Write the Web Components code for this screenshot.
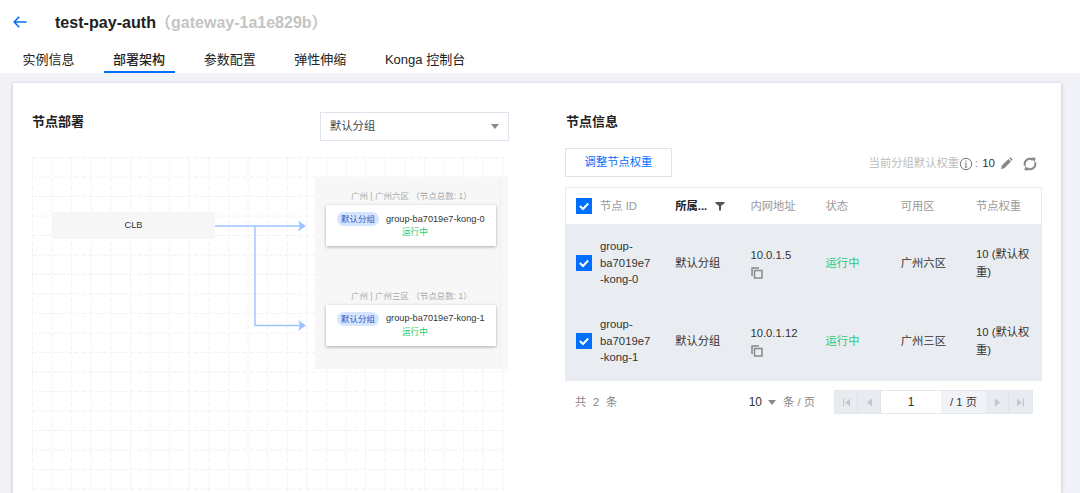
<!DOCTYPE html>
<html lang="zh">
<head>
<meta charset="utf-8">
<title>test-pay-auth</title>
<style>
    html, body { margin: 0; height: 493px; overflow: hidden; background: #f2f3f8; }
    body { font: 11.3px/17px "Liberation Sans", "Noto Sans CJK SC", sans-serif; color: #222; }
</style>
</head>
<body>
<gw-header name="test-pay-auth" sub="（gateway-1a1e829b）"></gw-header>
<gw-tabs>
    <gw-tab>实例信息</gw-tab>
    <gw-tab active>部署架构</gw-tab>
    <gw-tab>参数配置</gw-tab>
    <gw-tab>弹性伸缩</gw-tab>
    <gw-tab>Konga 控制台</gw-tab>
</gw-tabs>
<gw-card>
    <deploy-panel>
        <deploy-zone title-text="广州 | 广州六区 （节点总数: 1）" node="group-ba7019e7-kong-0"></deploy-zone>
        <deploy-zone title-text="广州 | 广州三区 （节点总数: 1）" node="group-ba7019e7-kong-1"></deploy-zone>
    </deploy-panel>
    <node-panel>
        <node-row head>
            <span slot="id">节点 ID</span>
            <span slot="group">所属...</span>
            <span slot="ip">内网地址</span>
            <span slot="state">状态</span>
            <span slot="zone">可用区</span>
            <span slot="weight">节点权重</span>
        </node-row>
        <node-row>
            <span slot="id">group-<br>ba7019e7<br>-kong-0</span>
            <span slot="group">默认分组</span>
            <span slot="ip">10.0.1.5</span>
            <span slot="state">运行中</span>
            <span slot="zone">广州六区</span>
            <span slot="weight">10 (默认权重)</span>
        </node-row>
        <node-row>
            <span slot="id">group-<br>ba7019e7<br>-kong-1</span>
            <span slot="group">默认分组</span>
            <span slot="ip">10.0.1.12</span>
            <span slot="state">运行中</span>
            <span slot="zone">广州三区</span>
            <span slot="weight">10 (默认权重)</span>
        </node-row>
    </node-panel>
</gw-card>

<script>
'use strict'

const define = (name, html, setup) => {
    customElements.define(name, class extends HTMLElement {
        constructor() {
            super()
            this.attachShadow({mode: 'open'})
        }
        connectedCallback() {
            this.shadowRoot.innerHTML = typeof html === 'function' ? html(this) : html
            if (setup) { setup(this) }
        }
    })
}

define('gw-header', el => /* html */`
<style>
    :host { display: flex; align-items: center; height: 44px; padding-left: 13px; background: #fff; }
    svg { width: 14px; height: 12px; margin-right: 28px; }
    b { font-size: 16.1px; color: #222; }
    span { font-size: 16px; font-weight: bold; color: #c4c4c4; margin-left: -1px; }
</style>
<svg viewBox="0 0 14 12" fill="none" stroke="#006eff" stroke-width="1.6"><path d="M13.5 6H1.2M6.2 .8 1.2 6l5 5.2"/></svg>
<b>${el.getAttribute('name')}</b><span>${el.getAttribute('sub')}</span>`)

define('gw-tabs', /* html */`
<style>
    :host { display: flex; gap: 19.6px; height: 29px; padding-left: 13px; background: #fff; box-sizing: border-box; }
</style>
<slot></slot>`)

define('gw-tab', el => /* html */`
<style>
    :host { display: block; padding: 0 9.5px; height: 29px; box-sizing: border-box; font-size: 13px; line-height: 31px; color: #222; white-space: nowrap; }
    :host([active]) { border-bottom: 2px solid #006eff; font-weight: 500; }
</style>
<slot></slot>`)

define('gw-card', /* html */`
<style>
    :host { display: flex; gap: 56px; width: 1048px; height: 410px; box-sizing: border-box; margin: 10px 0 0 13px; padding: 29px 0 0 19px; background: #fff; box-shadow: 0 1px 4px rgba(54, 58, 80, .3); }
</style>
<slot></slot>`)

define('panel-title', /* html */`
<style>
    :host { display: block; font-size: 13px; line-height: 20px; font-weight: bold; color: #222; }
</style>
<slot></slot>`)

define('deploy-panel', /* html */`
<style>
    :host { display: block; width: 477px; }
    .top { display: flex; justify-content: space-between; }
    .select { display: flex; justify-content: space-between; align-items: center; width: 189px; height: 29px; box-sizing: border-box; padding: 0 9px; border: 1px solid #dfe3ee; font-size: 11.3px; color: #444; }
    .select i { border: 4.5px solid transparent; border-top: 5.5px solid #888; border-bottom: 0; }
    .canvas { position: relative; width: 477px; height: 336px; margin-top: 16px; overflow: hidden; }
    .canvas > svg { position: absolute; left: 0; top: 0; }
    .clb { position: absolute; left: 20px; top: 55px; width: 163px; height: 27px; background: #f6f6f6; font-size: 9.2px; line-height: 27px; text-align: center; color: #333; }
    .zones { position: absolute; left: 283px; top: 20px; width: 193px; background: #f7f7f7; display: flex; flex-direction: column; gap: 7px; }
</style>
<div class="top">
    <panel-title>节点部署</panel-title>
    <div class="select">默认分组<i></i></div>
</div>
<div class="canvas">
    <svg width="474" height="336" id="grid" fill="none"></svg>
    <div class="clb">CLB</div>
    <svg width="474" height="336" fill="none" stroke="#9cc3ff" stroke-width="1.4">
        <path d="M183 69H268M223 69V168.5H268"/>
        <path d="M266 63.5 274 69 266 74.5 268 69Z" fill="#9cc3ff" stroke="none"/>
        <path d="M266 163 274 168.5 266 174 268 168.5Z" fill="#9cc3ff" stroke="none"/>
    </svg>
    <div class="zones"><slot></slot></div>
</div>`, el => {
    let d = ''
    for (let i = 0; i < 18; i++) { d += `M0 ${i * 19.5 + .5}H474` }
    for (let i = 0; i < 25; i++) { d += `M${i * 19.6 + .5} 0V336` }
    el.shadowRoot.getElementById('grid').innerHTML =
        `<path d="${d}" stroke="#f2f2f2" stroke-dasharray="5 2"/>`
})

define('deploy-zone', el => /* html */`
<style>
    :host { display: block; height: 92.5px; box-sizing: border-box; padding-top: 11px; border-right: 1px solid #efefef; margin-right: 7px; }
    .title { font-size: 8.5px; line-height: 17px; color: #aaa; white-space: nowrap; padding-left: 36px; }
    .node { width: 170px; height: 41px; margin: 0 0 0 11px; box-sizing: border-box; padding-top: 7px; background: #fff; box-shadow: 0 1px 3px rgba(54, 58, 80, .4); font-size: 9.2px; }
    .line { display: flex; align-items: center; height: 14px; padding-left: 11px; gap: 7px; white-space: nowrap; color: #333; }
    .tag { width: 42px; height: 14px; border-radius: 7px; background: #d5e5ff; color: #2a5ac0; font-size: 8.5px; line-height: 14px; text-align: center; }
    .state { font-size: 8.6px; line-height: 12px; padding-left: 76px; color: #2bc970; }
</style>
<div class="title">${el.getAttribute('title-text')}</div>
<div class="node">
    <div class="line"><span class="tag">默认分组</span><span>${el.getAttribute('node')}</span></div>
    <div class="state">运行中</div>
</div>`)

define('node-panel', /* html */`
<style>
    :host { display: block; width: 477px; }
    panel-title { margin-left: 1px; }
    .bar { display: flex; align-items: center; margin-top: 16px; height: 29px; }
    .btn { width: 107px; height: 29px; box-sizing: border-box; border: 1px solid #dfe3ee; color: #006eff; font-size: 11.3px; line-height: 27px; text-align: center; }
    .weight { margin-left: auto; display: flex; align-items: center; color: #bbb; padding-right: 5px; padding-top: 2px; }
    .weight b { font-weight: normal; font-size: 11.5px; color: #333; margin: 0 5px 0 0; }
    .weight span { color: #888; margin: 0 4px 0 2px; }
    .table { margin-top: 10px; border: 1px solid #e7eaf0; background: #e9edf2; }
    .foot { display: flex; align-items: center; height: 24px; margin-top: 9px; padding-left: 10px; color: #888; }
    .total { letter-spacing: 1.8px; }
    .size { margin-left: auto; display: flex; align-items: center; }
    .size b { font-weight: normal; font-size: 12px; color: #333; }
    .size i { border: 4px solid transparent; border-top: 5px solid #888; border-bottom: 0; margin: 0 7px 0 6px; }
    .pager { display: flex; margin: 0 9px 0 19px; height: 24px; box-sizing: border-box; border: 1px solid #e3e7ee; background: #e8ebf0; color: #333; }
    .pager div { display: flex; align-items: center; justify-content: center; width: 23px; box-sizing: border-box; border-right: 1px solid #dde1e8; }
    .pager div:last-child { border-right: 0; }
    .pager .num { width: 60px; background: #fff; border: 0; font-size: 12px; }
    .pager .of { width: 45px; background: #f2f3f8; border: 0; font-size: 11.3px; }
</style>
<panel-title>节点信息</panel-title>
<div class="bar">
    <div class="btn">调整节点权重</div>
    <div class="weight">当前分组默认权重
        <svg width="14" height="14" viewBox="0 0 14 14" fill="none" stroke="#777"><circle cx="7" cy="7" r="5.7"/><path d="M7 6v4M5.8 6.2H7M5.8 10.2h2.4M7 3.6v1.2"/></svg>
        <span>:</span><b>10</b>
        <svg width="13" height="13" viewBox="0 0 13 13" fill="#888" style="margin-right:10px"><path d="M1 12l.8-3.4 6.6-6.6 2.6 2.6-6.6 6.6zM9.2 1.2l1-1 2.6 2.6-1 1z"/></svg>
        <svg width="14" height="14" viewBox="0 0 14 14" fill="none" stroke="#888" stroke-width="2"><path d="M2 8.6A5 5 0 0 1 9.8 3M12 5.4A5 5 0 0 1 4.2 11"/><path d="M8.4 .4 12.6 .8 11.600 5.200ZM5.600 13.600 1.400 13.200 2.400 8.800Z" fill="#888" stroke="none"/></svg>
    </div>
</div>
<div class="table"><slot></slot></div>
<div class="foot">
    <span class="total">共 2 条</span>
    <div class="size"><b>10</b><i></i>条 / 页</div>
    <div class="pager">
        <div><svg width="9" height="9" viewBox="0 0 9 9" fill="#c2c6cf"><path d="M1 .5h1.2v8H1zM8 .5v8L3.2 4.5z"/></svg></div>
        <div><svg width="9" height="9" viewBox="0 0 9 9" fill="#c2c6cf"><path d="M7 .5v8L2 4.5z"/></svg></div>
        <div class="num">1</div>
        <div class="of">/ 1 页</div>
        <div><svg width="9" height="9" viewBox="0 0 9 9" fill="#c2c6cf"><path d="M2 .5v8l5-4z"/></svg></div>
        <div><svg width="9" height="9" viewBox="0 0 9 9" fill="#c2c6cf"><path d="M8 .5H6.8v8H8zM1 .5v8l4.800-4z"/></svg></div>
    </div>
</div>`)

const copyIcon = /* html */`<svg class="copy" width="12" height="12" viewBox="0 0 12 12" fill="none" stroke="#888" stroke-width="1.5"><path d="M1 9V1h7"/><rect x="3.5" y="3.5" width="7.5" height="7.5"/></svg>`
const filterIcon = /* html */`<svg class="filter" width="10" height="10" viewBox="0 0 10 10" fill="#555"><path d="M.5 1h9v1.200L6 5v4.500H4V5L.5 2.200z"/></svg>`

define('node-row', el => {
    const head = el.hasAttribute('head')
    return /* html */`
<style>
    :host { display: grid; grid-template-columns: 34px repeat(5, 75.2px) 1fr; align-items: center; height: 78px; line-height: 17px; color: #333; }
    :host([head]) { height: 36px; background: #fff; color: #999; }
    .check { display: block; width: 16px; height: 16px; margin-left: 9.5px; background: #006eff; }
    .group { display: flex; align-items: center; gap: 8px; }
    :host([head]) .group { color: #222; font-weight: bold; }
    .state { color: ${head ? '#999' : '#2bc970'}; }
    .ip svg { display: block; margin: 3px 0 0 1px; }
    .weight { padding-right: 8px; line-height: 18px; }
    .id { line-height: 16.7px; }
</style>
<svg class="check" viewBox="0 0 16 16" fill="none" stroke="#fff" stroke-width="2"><path d="M3.8 8 7 11l5.200-5.500"/></svg>
<div class="id"><slot name="id"></slot></div>
<div class="group"><slot name="group"></slot>${head ? filterIcon : ''}</div>
<div class="ip"><slot name="ip"></slot>${head ? '' : copyIcon}</div>
<div class="state"><slot name="state"></slot></div>
<div><slot name="zone"></slot></div>
<div class="weight"><slot name="weight"></slot></div>`
})
</script>
</body>
</html>
